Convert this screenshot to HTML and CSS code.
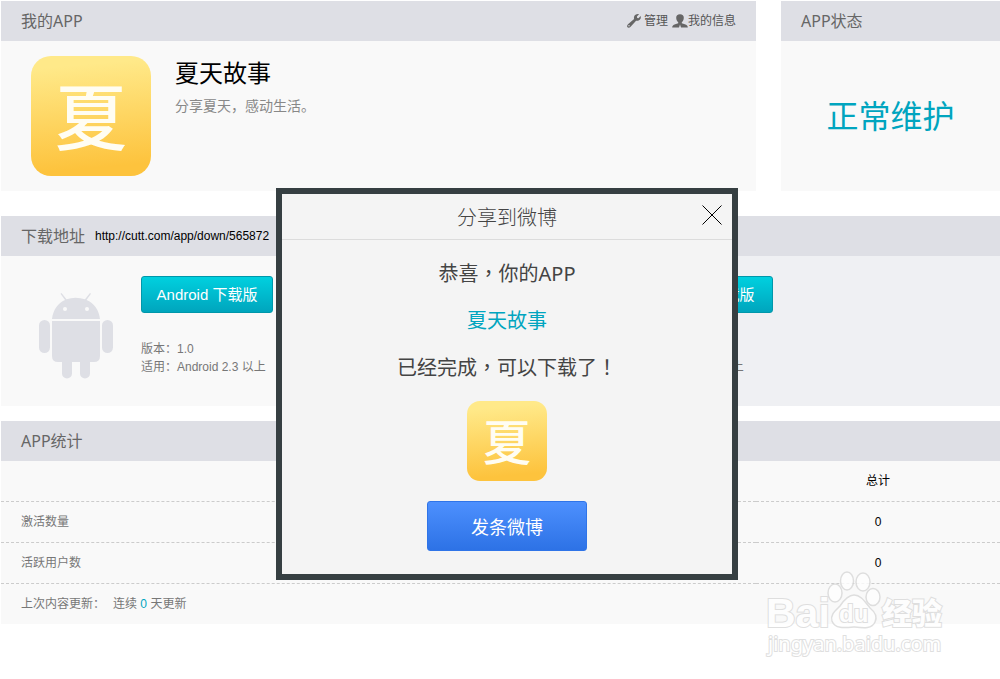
FILE: index.html
```html
<!DOCTYPE html>
<html lang="zh-CN">
<head>
<meta charset="utf-8">
<title>我的APP</title>
<link rel="stylesheet" href="styles.css">
</head>
<body>
<main class="page">
  <div class="top-row">
    <section class="card">
      <header class="card-head">
        <h2 class="card-title">我的APP</h2>
        <nav class="tools">
          <a class="tool tool-manage" href="#"><svg width="14" height="14" viewBox="0 0 14 14"><path fill="#666" fill-rule="evenodd" d="M8.500 0.800C9.800 -0.100 11.200 -0.100 12 0.300L9.900 2.500L10.200 3.900L11.500 4.200L13.600 2.100C14.200 3.800 13.500 5.500 12 6.300C11 6.900 10 7 9.100 6.700L3.600 12.800C2.600 13.900 1.100 14 0.500 13.300C-0.200 12.600 0 11.200 1 10.200L7.100 4.900C6.600 3.400 7.200 1.700 8.500 0.800ZM2 11.100A0.700 0.700 0 1 0 2 12.500A0.700 0.700 0 1 0 2 11.100Z"/></svg>管理</a>
          <a class="tool" href="#"><svg width="16" height="14" viewBox="0 0 16 14"><path fill="#666" d="M8 0.200C10.500 0.200 11.800 1.600 11.800 3.800C11.800 5.900 10.800 7.500 9.800 8.200V9.200L13.500 10.500C15 11 15.800 12 15.800 13.500H9L8 10.500L7 13.500H0.200C0.200 12 1 11 2.500 10.500L6.200 9.200V8.200C5.200 7.500 4.200 5.900 4.200 3.800C4.200 1.600 5.500 0.200 8 0.200Z"/></svg>我的信息</a>
        </nav>
      </header>
      <div class="app-body">
        <div class="app-icon">夏</div>
        <div>
          <h1 class="app-name">夏天故事</h1>
          <p class="app-desc">分享夏天，感动生活。</p>
        </div>
      </div>
    </section>
    <section class="card">
      <header class="card-head"><h2 class="card-title">APP状态</h2></header>
      <p class="status">正常维护</p>
    </section>
  </div>

  <section class="card downloads">
    <header class="card-head card-head-url">
      <h2 class="card-title">下载地址</h2>
      <a class="url" href="#">http://cutt.com/app/down/565872</a>
    </header>
    <div class="platforms">
      <div class="platform">
        <svg class="robot" width="74" height="87" viewBox="0 0 74 87"><g fill="#dedfe5"><path d="M13 26C14 17 19 10 26 7L21.500 0.800L22.500 0L27.500 6.300Q36.500 3 46 6.300L51 0L52 0.800L47.500 7C55 10 60 17 61 26Z"/><path d="M13 28H61V63Q61 69 55 69H51V80.500A5 5 0 0 1 41 80.500V69H33V80.500A5 5 0 0 1 23 80.500V69H19Q13 69 13 63Z"/><rect x="0" y="27" width="11" height="33" rx="5.500"/><rect x="63" y="27" width="11" height="33" rx="5.500"/></g><circle cx="26" cy="16" r="2" fill="#f9f9f9"/><circle cx="48" cy="16" r="2" fill="#f9f9f9"/></svg>
        <div class="platform-info">
          <button class="download" type="button">Android 下载版</button>
          <p class="spec">版本：1.0<br>适用：Android 2.3 以上</p>
        </div>
      </div>
      <div class="platform platform-ios">
        <div class="robot"></div>
        <div class="platform-info">
          <button class="download" type="button">iPhone 下载版</button>
          <p class="spec">版本：1.0<br>适用：iOS 4.3 以上</p>
        </div>
      </div>
    </div>
  </section>

  <section class="card stats">
    <header class="card-head"><h2 class="card-title">APP统计</h2></header>
    <table class="stats-table">
      <thead><tr><td></td><th class="total" scope="col">总计</th></tr></thead>
      <tbody>
        <tr><th scope="row">激活数量</th><td class="total">0</td></tr>
        <tr><th scope="row">活跃用户数</th><td class="total">0</td></tr>
      </tbody>
      <tfoot>
        <tr><th scope="row" colspan="2">上次内容更新：<span class="streak">连续 <span class="accent">0</span> 天更新</span></th></tr>
      </tfoot>
    </table>
  </section>
</main>

<div class="dialog" role="dialog" aria-labelledby="dialog-title">
  <header class="dialog-head">
    <h2 class="dialog-title" id="dialog-title">分享到微博</h2>
    <button class="close" type="button" aria-label="关闭"><svg width="20" height="20" viewBox="0 0 20 20"><path d="M0.500 0.500L19.500 19.500M19.500 0.500L0.500 19.500" stroke="#000" stroke-width="1"/></svg></button>
  </header>
  <div class="dialog-body">
    <p class="line" lang="zh-Hant">恭喜，你的APP</p>
    <p class="line accent">夏天故事</p>
    <p class="line" lang="zh-Hant">已经完成，可以下载了！</p>
    <div class="app-icon app-icon-small">夏</div>
    <button class="post" type="button">发条微博</button>
  </div>
</div>

<svg class="watermark" width="190" height="92" viewBox="0 0 190 92" aria-hidden="true">
  <g fill="#fff" stroke="#d8d8d8" stroke-width="1.500">
    <text class="mark-latin" x="4" y="59" font-size="41">Bai</text>
    <ellipse cx="73" cy="25" rx="7" ry="9"/><ellipse cx="85" cy="13" rx="6.500" ry="9"/><ellipse cx="101" cy="14" rx="7" ry="9"/><ellipse cx="111" cy="29" rx="7" ry="8.500"/>
    <path d="M92 27C99 27 103 34 108 40C113 44 116 48 113 54C110 61 102 60 92 59C82 60 73 61 70 53C68 47 73 43 78 38C82 32 86 27 92 27Z"/>
    <text class="mark-latin" x="77" y="54" font-size="24">du</text>
    <text class="mark-cjk" x="120" y="56" font-size="30">经验</text>
    <text class="mark-url" x="6" y="83" font-size="20">jingyan.baidu.com</text>
  </g>
</svg>
</body>
</html>
```
FILE: styles.css
```css
* { box-sizing: border-box; }
body {
  margin: 0;
  background: #fff;
  color: #777;
  font: 12px/18px "Liberation Sans", "Noto Sans CJK SC", sans-serif;
}
h1, h2, p { margin: 0; font-weight: 400; }
a { color: inherit; text-decoration: none; }
button { padding: 0; cursor: pointer; }
.page { padding: 1px 0 0 1px; }
.top-row { display: grid; grid-template-columns: 1fr 219px; gap: 25px; }
.card { background: #f9f9f9; }
.card-head {
  display: flex;
  align-items: center;
  justify-content: space-between;
  height: 40px;
  padding: 0 20px;
  background: #dedfe5;
}
.card-title {
  color: #666;
  font: 16px/24px "Noto Sans", "Noto Sans CJK SC", sans-serif;
}
.card-head-url { justify-content: flex-start; gap: 10px; }
.url { color: #000; }
.tools { display: flex; gap: 4px; color: #555; }
.tool { display: flex; align-items: center; }
.tool-manage { gap: 3px; }
.app-body { display: flex; gap: 24px; padding: 15px 30px; }
.app-icon {
  width: 120px;
  height: 120px;
  border-radius: 20px;
  background: linear-gradient(175deg, #ffe989 10%, #fdc33d 90%);
  color: #fffdf3;
  font: 500 72px/114px "Noto Sans CJK SC", sans-serif;
  text-align: center;
}
.app-name { color: #000; font: 24px/32px "Noto Sans CJK SC", sans-serif; }
.app-desc { margin-top: 8px; color: #888; font-size: 14px; line-height: 20px; }
.status {
  padding-bottom: 4px;
  color: #00a5bf;
  font: 32px/146px "Noto Sans CJK SC", sans-serif;
  text-align: center;
}
.downloads { margin-top: 25px; }
.platforms { display: grid; grid-template-columns: 1fr 1fr; }
.platform { display: flex; gap: 28px; height: 150px; padding: 20px 38px; }
.platform-ios { background: #eff0f3; }
.robot { flex: none; width: 74px; margin-top: 17px; }
.download {
  display: block;
  width: 132px;
  height: 37px;
  border: 1px solid #0097aa;
  border-radius: 3px;
  background: linear-gradient(#00d0df, #00a5bd);
  color: #fff;
  font: 15px/20px "Liberation Sans", "Noto Sans CJK SC", sans-serif;
}
.spec { margin-top: 27px; }
.stats { margin-top: 15px; }
.stats-table { width: 100%; border-collapse: separate; border-spacing: 0; }
.stats-table th, .stats-table td {
  height: 41px;
  padding: 0 20px;
  border-bottom: 1px dashed #ccc;
  font-weight: 400;
  text-align: left;
}
.stats-table tfoot th { height: 40px; border-bottom: 0; }
.stats-table .total { width: 244px; padding: 0; color: #000; text-align: center; }
.streak { margin-left: 8px; }
.accent { color: #00a5bf; }
.dialog {
  position: absolute;
  top: 188px;
  left: 276px;
  width: 462px;
  border: 6px solid #363f42;
  background: #f4f4f4;
}
.dialog-head {
  display: grid;
  grid-template-columns: 1fr auto 1fr;
  align-items: center;
  height: 46px;
  padding: 0 10px;
  border-bottom: 1px solid #dcdcdc;
}
.dialog-title {
  grid-column: 2;
  color: #444;
  font: 300 20px/30px "Noto Sans CJK SC", sans-serif;
}
.close { justify-self: end; width: 20px; height: 20px; margin-bottom: 4px; border: 0; background: none; }
.close svg { display: block; }
.dialog-body { display: flex; flex-direction: column; align-items: center; padding: 10px 20px 23px; }
.line { color: #444; font: 20px/47px "Noto Sans", "Noto Sans CJK SC", sans-serif; }
.line:lang(zh-Hant) { font-family: "Noto Sans", "Noto Sans CJK TC", sans-serif; }
.line.accent { color: #00a5bf; }
.app-icon-small { width: 80px; height: 80px; margin: 10px 0 20px; border-radius: 13px; font-size: 48px; line-height: 76px; }
.post {
  width: 160px;
  height: 50px;
  border: 1px solid #2f74e8;
  border-radius: 3px;
  background: linear-gradient(#4d90fe, #2d72e6);
  color: #fff;
  font: 18px/26px "Noto Sans CJK SC", sans-serif;
}
.watermark { position: absolute; top: 568px; left: 762px; opacity: 0.8; pointer-events: none; }
.watermark text { paint-order: stroke; stroke-width: 2px; }
.mark-latin { font-family: "Liberation Sans", sans-serif; font-weight: 700; }
.mark-cjk { font-family: "Noto Sans CJK SC", sans-serif; font-weight: 900; }
.mark-url { font-family: "Noto Sans", sans-serif; }
```
